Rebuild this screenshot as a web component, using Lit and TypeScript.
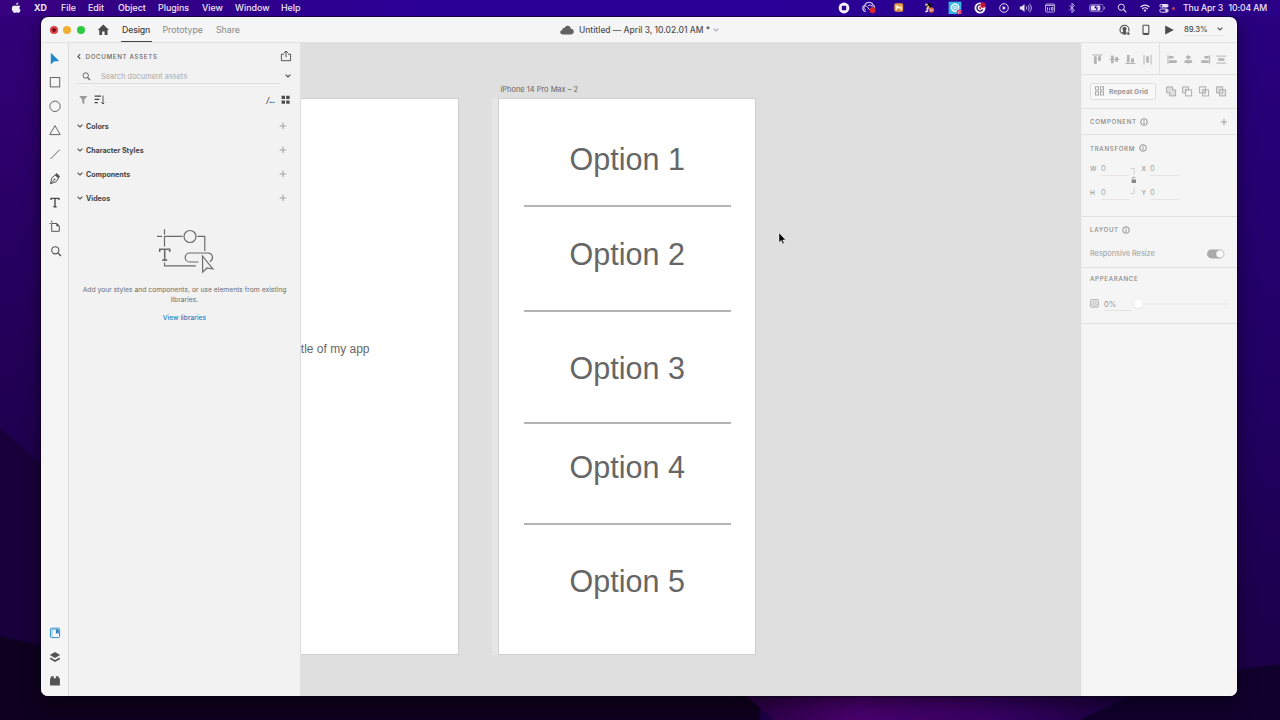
import { LitElement, html, svg, css, type TemplateResult } from "lit";
import { customElement } from "lit/decorators.js";

type Glyph = ReturnType<typeof svg>;

const icon = (w: number, h: number, body: Glyph): TemplateResult =>
  html`<svg class="icon" width=${w} height=${h} viewBox="0 0 ${w} ${h}" fill="none">${body}</svg>`;

const MENUS = ["File", "Edit", "Object", "Plugins", "View", "Window", "Help"];

const STATUS: Glyph[] = [
  svg`<circle cx="8" cy="8" r="5.4" fill="#f4f0fa"/><rect x="5.8" y="5.8" width="4.4" height="4.4" rx=".8" fill="#2a0090"/>`,
  svg`<path d="M4.600 11.600a3.300 3.300 0 0 1-.8-6.300 4.400 4.400 0 0 1 8.300-.2 3 3 0 0 1 1.600 2.600" stroke="#d9ccee" stroke-width="1.200"/><path d="M4.800 9.700a1.800 1.800 0 1 1 1.600-2.800l2.200 3M7 6a2.500 2.500 0 0 1 4.500 1.600" stroke="#d9ccee" stroke-width="1"/><circle cx="11.600" cy="10.200" r="3" fill="#d9262c"/>`,
  svg`<rect x="3.300" y="3.200" width="8.900" height="8.600" rx="1.800" fill="#e99b43"/><path d="M4.800 9V5.600h2l.8 1h3V9.800H5.500" fill="#fff1d9"/><path d="M6.500 8.500h2.600v2H6.500z" fill="#d27b28"/>`,
  svg`<circle cx="8" cy="5.700" r="2.800" fill="#111"/><path d="M4 4.200h3M4.600 5.800l2-1.500M4.400 11.500h2.200V8.200H5" stroke="#d8c6a4" stroke-width="1.100"/><circle cx="7.200" cy="7" r="1.300" fill="#e9bd87"/><path d="M5 12.500c0-3 1.600-4 4-4" stroke="#e7e1f3" stroke-width="1"/><circle cx="10.400" cy="10" r="2.700" fill="#e2653e"/><path d="M9.700 8.900v2.200M11.100 8.900v2.200" stroke="#fff" stroke-width=".6"/>`,
  svg`<rect x="1.600" y="1.700" width="12.800" height="12.300" fill="#35b5df"/><circle cx="8" cy="7.600" r="4.400" fill="#e9f8fc"/><circle cx="8" cy="7.600" r="2.400" stroke="#56b7d9" stroke-width="1"/><circle cx="8" cy="7.600" r=".8" fill="#56b7d9"/><circle cx="12" cy="12" r="2.400" fill="#ea4164"/><path d="M11.100 12.900l1.800-1.800" stroke="#fff" stroke-width=".7"/>`,
  svg`<circle cx="8" cy="8" r="5.500" fill="#f4f0fa"/><path d="M10.800 9.700a3.200 3.200 0 1 1-2.500-5" stroke="#2b0a55" stroke-width="1.300"/><circle cx="11" cy="5" r="2.700" fill="#c4143c"/><circle cx="8.200" cy="8.100" r="1" fill="#c4143c"/>`,
  svg`<circle cx="8" cy="8" r="4.300" stroke="#e2daf2" stroke-width="1"/><path d="M6.700 5.900v4.200L10.200 8z" fill="#eee8f8"/>`,
  svg`<path d="M1.800 6.500h1.800L6.500 4v8L3.600 9.600H1.800z" fill="#e9e2f5"/><path d="M8 6.200a2.600 2.600 0 0 1 0 3.600M9.800 4.900a4.400 4.400 0 0 1 0 6.200M11.600 3.800a6 6 0 0 1 0 8.400" stroke="#cfc3e8" stroke-width=".9"/>`,
  svg`<rect x="3.600" y="4" width="9" height="8" rx="1" stroke="#b9aadd" stroke-width="1"/><path d="M4 5.400h8.400M5.500 7.400v3M7.600 7.400v3M9.600 7.400h1.400v2.600H9.600z" stroke="#c6badf" stroke-width="1"/>`,
  svg`<path d="M5.400 5.600l5 4.600L8 12.600V3.200l2.400 2.400-5 4.600" stroke="#d8ceed" stroke-width=".9"/>`,
  svg`<rect x=".5" y="4.400" width="13.600" height="7.200" rx="2" stroke="#a08fd0" stroke-width=".8"/><rect x="1.700" y="5.500" width="9.600" height="5" rx="1" fill="#e8e0f5"/><path d="M15.400 6.800v2.400" stroke="#a08fd0"/><path d="M7.600 4.400L5 8.300h2.400l-.9 3.200 3-4H7.200z" fill="#2a0090"/>`,
  svg`<circle cx="7.300" cy="7.200" r="3.100" stroke="#e2daf2" stroke-width="1"/><path d="M9.600 9.500l2.700 2.800" stroke="#e2daf2" stroke-width="1.100"/>`,
  svg`<path d="M3.600 7a6.200 6.200 0 0 1 8.800 0M5.200 9a4 4 0 0 1 5.600 0" stroke="#e6dff4" stroke-width="1.200"/><path d="M6.500 10.300L8 12l1.500-1.700a2.200 2.200 0 0 0-3 0z" fill="#e6dff4"/>`,
  svg`<rect x="3.400" y="4" width="9.200" height="3.600" rx="1.800" fill="#e3daf3"/><rect x="3.800" y="9" width="8.400" height="3.200" rx="1.600" stroke="#e3daf3"/><circle cx="5.300" cy="5.800" r="1" fill="#2a0090"/><circle cx="10.400" cy="10.600" r="1.400" fill="#e3daf3"/>`,
];

const TOOLS: Glyph[] = [
  svg`<path d="M7.800 5.700v12l2.900-3.300 5.500-.5z" fill="#2089ca"/>`,
  svg`<rect x="7.300" y="6.500" width="9.400" height="9.400" stroke="#666" stroke-width="1"/>`,
  svg`<circle cx="12" cy="11.300" r="5.200" stroke="#666" stroke-width="1"/>`,
  svg`<path d="M12 6.600l5.200 9H6.800z" stroke="#666" stroke-width="1"/>`,
  svg`<path d="M7.500 16l9.200-9.300" stroke="#666" stroke-width="1"/>`,
  svg`<path d="M7.500 16.800l1.300-6 3.400-2.800 3.300 3-2.200 3.600zM7.800 16.500l3-3.200" stroke="#555" stroke-width="1"/><path d="M12 7.700L13.600 6l3.500 3.400-1.600 1.800z" fill="#555"/><circle cx="11.500" cy="12.400" r=".9" fill="#555"/>`,
  svg`<path d="M8.100 9.100V7.400h7.800v1.700M12 7.400v8.200M10.400 15.800h3.200" stroke="#4b4b4b" stroke-width="1.400"/>`,
  svg`<path d="M8.700 8.500h5l2.600 2.400v5.400H8.700zM8.700 5.600v2M6.500 8.500h1.200" stroke="#555" stroke-width="1"/><path d="M13.300 8v3.300h3.300z" fill="#4b4b4b"/>`,
  svg`<circle cx="12.300" cy="11.300" r="3.600" stroke="#555" stroke-width="1.100"/><path d="M15 14l2.900 2.900" stroke="#555" stroke-width="1.400"/>`,
];

const DOCKS: Glyph[] = [
  svg`<rect x="7.400" y="7.200" width="9.200" height="9.400" rx="1.200" stroke="#2f8fc6" stroke-width="1"/><path d="M9 7.500v8.800M7.800 8.700h8.600" stroke="#7cbbe0" stroke-width=".9"/><path d="M12.900 8.500h2.800v4.400l-1.400-1.100-1.400 1.100z" fill="#2480bd"/>`,
  svg`<path d="M12 7l5.200 2.900-5.200 3-5.200-3z" fill="#555"/><path d="M7.200 13.300l4.800 2.700 4.800-2.700" stroke="#555" stroke-width="1.700"/>`,
  svg`<path d="M7 9.200h.9V7.300h2.800v1.900h2.200V7.300h2.800v1.900h1.200v7.300H7z" fill="#555"/>`,
];

const ALIGN_V: Glyph[] = [
  svg`<path d="M3.400 4h10M6.300 5v8M10.500 5v5" stroke="#b4b4b4" stroke-width="1"/><path d="M4.900 5.400h2.900v7.400H4.900zM9.100 5.400H12v4.400H9.100z" fill="#b4b4b4"/>`,
  svg`<path d="M3.400 8.400h10" stroke="#b4b4b4" stroke-width="1"/><path d="M5 4.500h2.700v7.800H5zM9.300 6.100H12v4.600H9.300z" fill="#b4b4b4"/>`,
  svg`<path d="M3.400 12.500h10" stroke="#b4b4b4" stroke-width="1"/><path d="M4.900 4h2.700v7.600H4.900zM9.100 7.200h2.800v4.400H9.100z" fill="#b4b4b4"/>`,
  svg`<path d="M5 4v9.400M12 4v9.400" stroke="#b4b4b4" stroke-width="1"/><path d="M7.200 5.200h2.600v6.600H7.200z" fill="#b4b4b4"/>`,
];
const ALIGN_H: Glyph[] = [
  svg`<path d="M4 4v9.200" stroke="#b4b4b4" stroke-width="1"/><path d="M5 5h4.400v2.600H5zM5 9.300h7.800V12H5z" fill="#b4b4b4"/>`,
  svg`<path d="M8.200 3.600v9.800" stroke="#b4b4b4" stroke-width="1"/><path d="M6.200 5h4.200v2.600H6.200zM4.500 9.300h7.600V12H4.500z" fill="#b4b4b4"/>`,
  svg`<path d="M12.600 4v9.200" stroke="#b4b4b4" stroke-width="1"/><path d="M7.400 5h4.400v2.600H7.400zM4.200 9.300h7.600V12H4.200z" fill="#b4b4b4"/>`,
  svg`<path d="M3.300 5.100h10M3.300 12.100h10" stroke="#b4b4b4" stroke-width="1"/><path d="M5.200 7.200h6.200v2.600H5.200z" fill="#b4b4b4"/>`,
];
const BOOLEANS: Glyph[] = [
  svg`<path d="M3.600 3.900h6v3h3v6h-6v-3h-3z" fill="#dedede" stroke="#adadad" stroke-width="1"/>`,
  svg`<path d="M3.600 3.900h6v3h-3v3h-3z" fill="#e7e7e7" stroke="#adadad" stroke-width="1"/><rect x="6.600" y="6.900" width="6" height="6" stroke="#adadad"/>`,
  svg`<rect x="3.600" y="3.900" width="6" height="6" stroke="#adadad"/><rect x="6.600" y="6.900" width="6" height="6" stroke="#adadad"/><path d="M6.600 6.900h3v3h-3z" fill="#dedede" stroke="#adadad"/>`,
  svg`<rect x="3.600" y="3.900" width="6" height="6" fill="#e2e2e2" stroke="#adadad"/><rect x="6.600" y="6.900" width="6" height="6" fill="#e2e2e2" stroke="#adadad"/><path d="M6.600 6.900h3v3h-3z" fill="#f5f5f5" stroke="#adadad"/>`,
];

const chevron = (color: string) => icon(8, 8, svg`<path d="M1.600 2.700l2.400 2.300 2.400-2.300" stroke=${color} stroke-width="1.100"/>`);
const plus = (color: string) => icon(8, 8, svg`<path d="M4 .8v6.400M.8 4h6.400" stroke=${color} stroke-width=".9"/>`);
const info = icon(8, 8, svg`<circle cx="4" cy="4" r="3.300" stroke="#777" stroke-width=".8"/><path d="M4 3.600v2.200M4 2v.9" stroke="#777" stroke-width=".9"/>`);

const OPTIONS = [
  { label: "Option 1", top: 42 },
  { label: "Option 2", top: 137 },
  { label: "Option 3", top: 251 },
  { label: "Option 4", top: 350 },
  { label: "Option 5", top: 464 },
];
const RULES = [106, 211, 323, 424];

@customElement("app-root")
export class AppRoot extends LitElement {
  static styles = css`
    :host { display: block; width: 1280px; height: 720px; overflow: hidden; font-family: Inter, "Liberation Sans", sans-serif; color: #4b4b4b; }
    * { box-sizing: border-box; }
    svg { display: block; flex: none; overflow: visible; }
    span { white-space: nowrap; }
    .desktop { position: relative; width: 1280px; height: 720px; display: flex; flex-direction: column; background: #1a0040; }
    .wall { position: absolute; inset: 0; }
    .menubar { position: relative; flex: none; height: 16px; display: flex; align-items: center; color: #eee8f8; font-size: 8.9px; font-weight: 500; background: linear-gradient(90deg, #36007e, #2c0094 30%, #2a0098 60%, #2a0086); }
    .menus { display: grid; grid-template-columns: 23px 27px 27px 30px 40px 44px 33px 46px 30px; padding-left: 11px; align-items: center; line-height: 14px; }
    .menus span, .menus b { margin-top: -1px; }
    .menus b { font-weight: 700; }
    .status { margin-left: 525px; display: grid; grid-template-columns: 25px 29.5px 30.5px 26px 25px 23.5px 22.5px 24px 21.5px 25.5px 24.5px 23.5px 19px 16px; align-items: center; }
    .dot { width: 3px; height: 3px; border-radius: 50%; background: #c9455c; margin: 1px 8px 0 0; }
    .clock { display: flex; gap: 5.5px; font-size: 8.7px; letter-spacing: -.12px; margin-top: -1px; }
    .window { position: relative; margin: 1px 0 0 41px; width: 1196px; height: 679px; border-radius: 7px; overflow: hidden; background: #f5f5f5; display: flex; flex-direction: column; }
    .shadow { position: absolute; left: 41px; top: 17px; width: 1196px; height: 679px; border-radius: 7px; box-shadow: 0 6px 18px rgba(0, 0, 0, .5), 0 0 1px 1px rgba(10, 0, 30, .5); }
    .titlebar { flex: none; height: 26px; display: grid; grid-template-columns: 56px 25px 40.5px 53.5px 344px 1fr auto; align-items: center; border-bottom: 1px solid #e2e2e2; font-size: 8.8px; color: #888; }
    .lights { display: flex; gap: 5.4px; padding-left: 9px; }
    .light { width: 8px; height: 8px; border-radius: 50%; }
    .red { background: radial-gradient(circle, #7d1118 0 1.6px, #dc4345 2.2px); }
    .amber { background: #efb02f; }
    .green { background: #2fca43; }
    .tab { height: 25px; line-height: 25px; letter-spacing: -.02px; }
    .tab.active { color: #444; width: 31px; line-height: 26px; border-bottom: 1.5px solid #444; padding-left: 1px; margin-left: -1px; font-weight: 500; font-size: 8.7px; letter-spacing: -.1px; }
    .doc { display: flex; align-items: center; gap: 5px; color: #505050; }
    .doc .title { font-size: 8.45px; font-weight: 500; letter-spacing: .01px; }
    .doc .icon:last-child { margin-left: -3px; }
    .actions { display: flex; align-items: center; padding-right: 13px; color: #4b4b4b; }
    .zoom { display: flex; align-items: center; justify-content: space-between; width: 40px; height: 13px; margin-left: 9.5px; font-size: 7.7px; font-weight: 500; letter-spacing: -.08px; border-bottom: 1px solid #e6e6e6; }
    .zoom span { padding-top: 1px; }
    .body { flex: 1; display: grid; grid-template-columns: 28px 232px 780px 1fr; min-height: 0; }
    .tools { border-right: 1px solid #dcdcdc; display: flex; flex-direction: column; padding: 4px 0 3px 2px; background: #f5f5f5; }
    .spring { flex: 1; }
    .assets { background: #f2f2f2; border-right: 1px solid #ddd; display: flex; flex-direction: column; }
    .head { height: 26px; padding: 0 8px 0 6px; display: flex; align-items: center; }
    .caps { font-size: 6.2px; letter-spacing: .66px; font-weight: 500; color: #666; }
    .head .caps { flex: 1; margin-left: 2.5px; margin-top: 1px; }
    .search { margin-left: 8px; height: 15px; display: flex; align-items: center; }
    .field { width: 203px; height: 15px; border-bottom: 1px solid #dfdfdf; display: flex; align-items: center; gap: 9px; padding: 0 0 0 4px; color: #aaa; font-size: 7.4px; }
    .search > .icon { margin: -1px 0 0 4px; }
    .filters { height: 30px; padding: 1px 9px 0 9px; display: flex; align-items: center; gap: 4px; }
    .filters .path { margin: 0 1.5px 0 auto; font-size: 8px; font-weight: 600; color: #555; letter-spacing: -.6px; }
    .section { height: 24px; display: flex; align-items: center; padding: 0 13px 0 7px; font-size: 7.05px; font-weight: 700; color: #444; }
    .section span { flex: 1; margin-left: 2px; }
    .empty { display: flex; flex-direction: column; align-items: center; text-align: center; padding-top: 19px; font-size: 6.78px; line-height: 10px; color: #6b6b6b; }
    .empty p { margin: 12px 0 0; width: 230px; }
    .empty a { margin-top: 8px; color: #2480c4; font-size: 6.7px; font-weight: 500; }
    .canvas { position: relative; overflow: hidden; background: #dfdfdf; border-right: 1px solid #ddd; }
    .board { position: absolute; top: 55px; height: 557px; background: #fff; border: 1px solid #cfcfcf; }
    .board.first { left: -1px; width: 158.5px; }
    .board.second { left: 197px; width: 258px; }
    .guide { position: absolute; left: 191px; top: 55px; width: 7px; height: 557px; background: #e6e6e6; }
    .name { position: absolute; left: 199.5px; top: 41px; font-size: 7.45px; line-height: 12px; color: #666; }
    .subtitle { position: absolute; left: -.2px; top: 242px; font: 12px/16px "Liberation Sans", sans-serif; color: #666; }
    .option { position: absolute; left: 70.6px; font: 30.5px/36px "Liberation Sans", sans-serif; color: #666; }
    .rule { position: absolute; left: 25px; width: 207px; height: 2px; background: #b4b4b4; }
    .pointer { position: absolute; left: 477px; top: 189px; }
    .props { background: #f5f5f5; border-left: 1px solid #eee; color: #999; font-size: 8px; }
    .group { border-bottom: 1.5px solid #e0e0e0; padding: 0 8px 0 8px; }
    .align { height: 32px; display: grid; grid-template-columns: 77px 1fr; padding: 0; }
    .align > div { display: flex; align-items: center; padding-left: 7px; gap: .7px; }
    .align > div + div { border-left: 1px solid #e0e0e0; padding-left: 4px; gap: .4px; }
    .repeat { height: 33.5px; display: flex; align-items: center; }
    .btn { width: 66px; height: 17px; border: 1px solid #dedede; border-radius: 2px; display: flex; align-items: center; gap: 4.5px; padding-left: 3.5px; font-weight: 700; font-size: 6.85px; margin-right: 6.7px; background: #f8f8f8; }
    .repeat > .icon { margin-right: .7px; }
    .row { display: flex; align-items: center; gap: 3.5px; }
    .row .caps { color: #888; }
    .component { height: 26.5px; padding-top: 1px; }
    .component .icon:last-child { margin-left: auto; margin-right: 1.5px; }
    .transform { height: 81.5px; padding-top: 9px; }
    .dims { display: grid; grid-template-columns: 10.5px 28px 13px 8px 29px; grid-template-rows: 24px 24px; margin-top: 4.5px; align-items: center; font-size: 6.4px; font-weight: 500; }
    .dims .val { height: 15px; line-height: 16px; font-size: 7.6px; font-weight: 400; border-bottom: 1px solid #e5e5e5; color: #aaa; padding-left: .6px; }
    .dims .link { grid-column: 3; grid-row: 1 / span 2; margin-left: 1px; }
    .layout { height: 51px; padding-top: 9px; }
    .resize { display: flex; justify-content: space-between; align-items: center; margin-top: 12px; padding-right: 4px; font-size: 7.35px; }
    .resize span { line-height: 16px; }
    .appearance { height: 56px; padding-top: 7.5px; }
    .opacity { display: flex; align-items: center; margin-top: 14px; font-size: 7.6px; }
    .opacity .val { width: 28px; height: 15px; line-height: 17px; margin-left: 5px; border-bottom: 1px solid #e2e2e2; }
  `;

  render() {
    return html`
      <div class="desktop">
        <svg class="wall" width="1280" height="720" viewBox="0 0 1280 720">
          <defs>
            <linearGradient id="side" x1="0" y1="0" x2="0" y2="1">
              <stop offset="0" stop-color="#32007a"/><stop offset=".5" stop-color="#220056"/><stop offset="1" stop-color="#15003a"/>
            </linearGradient>
            <linearGradient id="east" x1="0" y1="0" x2="0" y2="1">
              <stop offset="0" stop-color="#290080"/><stop offset=".55" stop-color="#210062"/><stop offset="1" stop-color="#1b0044"/>
            </linearGradient>
            <linearGradient id="glow" x1="740" y1="0" x2="1130" y2="0" gradientUnits="userSpaceOnUse">
              <stop offset="0" stop-color="#26003f"/><stop offset=".3" stop-color="#48006c"/><stop offset=".65" stop-color="#360062"/><stop offset="1" stop-color="#18003c"/>
            </linearGradient>
          </defs>
          <rect width="640" height="720" fill="url(#side)"/>
          <rect x="640" width="640" height="720" fill="url(#east)"/>
          <path d="M0 428L48 470V720H0z" fill="#18003a"/>
          <path d="M0 636L60 650H760V720H0z" fill="#0e001f"/>
          <path d="M738 690H1240V720H775z" fill="url(#glow)"/>
          <path d="M1080 720C1140 690 1190 675 1280 664V720z" fill="#10002c"/>
        </svg>
        <div class="shadow"></div>
        <header class="menubar">
          <nav class="menus">
            ${icon(11, 12, svg`<path transform="translate(0 .6)" d="M7.300 0c.1 1.200-.9 2.400-2.100 2.400C5 1.300 6.100.2 7.300 0zM9.200 4C8 4.800 8.100 6.800 9.600 7.400 9.200 8.700 8.300 10.300 7.200 10.300c-.7 0-.9-.4-1.800-.4s-1.100.4-1.800.4C2.300 10.300.8 7.900.8 5.900c0-2 1.300-3.100 2.500-3.100.8 0 1.500.5 2 .5s1.300-.6 2.300-.5c.5 0 1.200.3 1.600 1.200z" fill="#f1ecf9"/>`)}
            <b>XD</b>${MENUS.map((m) => html`<span>${m}</span>`)}
          </nav>
          <div class="status">${STATUS.map((g) => icon(16, 16, g))}</div>
          <i class="dot"></i>
          <div class="clock"><span>Thu Apr 3</span><span>10:04 AM</span></div>
        </header>
        <main class="window">
          <header class="titlebar">
            <div class="lights"><i class="light red"></i><i class="light amber"></i><i class="light green"></i></div>
            ${icon(12, 12, svg`<path d="M6.300.6l5.700 5.400H10.500V11H7.600V7.500H5.100V11H2.300V6H.7z" fill="#4b4b4b"/>`)}
            <span class="tab active">Design</span><span class="tab">Prototype</span><span class="tab">Share</span>
            <div class="doc">
              ${icon(14, 10, svg`<path d="M3 9.500C1.200 9.500.2 8.400.2 7.100c0-1.200.9-2 2-2.200C2.400 3.300 3.500 2.500 4.700 2.700 5.400 1.200 6.500.7 7.700.7c1.900 0 3.100 1.400 3.100 3.100 1.900.1 3 1.200 3 2.800 0 1.700-1.200 2.900-2.900 2.900z" fill="#626262"/>`)}
              <span class="title">Untitled — April 3, 10.02.01 AM *</span>${chevron("#aaa")}
            </div>
            <div class="actions">
              ${icon(12, 12, svg`<circle cx="5.500" cy="5.700" r="4.500" stroke="#4b4b4b" stroke-width="1.100"/><path d="M5.500 2.700c1.300 0 2 .9 2 2.100 0 1-.5 1.800-.9 2.300.2.800 1.300 1 1.900 1.500L5.800 10.400 2.500 8.600c.6-.5 1.700-.7 1.900-1.500C4 6.600 3.500 5.800 3.500 4.800c0-1.200.7-2.100 2-2.100z" fill="#555"/><path d="M9.200 7.600v4M7.200 9.600h4" stroke="#f5f5f5" stroke-width="2.400"/><path d="M9.200 8v3.200M7.600 9.600h3.200" stroke="#4b4b4b" stroke-width="1"/>`)}
              ${icon(34, 12, svg`<rect x="12" y="1.200" width="5.800" height="9.200" rx=".8" stroke="#4b4b4b" stroke-width="1.100"/><path d="M12.300 9.400h5.200" stroke="#4b4b4b" stroke-width="1"/>`)}
              ${icon(10, 12, svg`<path d="M.2 1.600L8.800 6 .2 10.400z" fill="#4b4b4b"/>`)}
              <div class="zoom"><span>89.3%</span>${chevron("#555")}</div>
            </div>
          </header>
          <div class="body">
            <aside class="tools">
              ${TOOLS.map((g) => icon(24, 24, g))}
              <div class="spring"></div>
              ${DOCKS.map((g) => icon(24, 24, g))}
            </aside>
            <section class="assets">
              <div class="head">
                ${icon(8, 8, svg`<path d="M5.200 2L3 4.400l2.200 2.400" stroke="#444" stroke-width="1.100"/>`)}
                <span class="caps">DOCUMENT ASSETS</span>
                ${icon(12, 12, svg`<path d="M4 4.200H1.400v6.500h9.200V4.200H8M6 7.200V1.200M3.900 3.100L6 1l2.100 2.100" stroke="#555" stroke-width="1"/>`)}
              </div>
              <div class="search">
                <div class="field">
                  ${icon(11, 11, svg`<circle cx="4.700" cy="4.500" r="2.700" stroke="#555" stroke-width=".9"/><path d="M6.600 6.500l2.500 2.600" stroke="#555" stroke-width="1.100"/>`)}
                  <span>Search document assets</span>
                </div>
                ${chevron("#444")}
              </div>
              <div class="filters">
                ${icon(12, 12, svg`<path d="M1.200 2h8.200L6.300 5.800v4.400L4.300 9V5.800z" fill="#999"/>`)}
                ${icon(12, 12, svg`<path d="M.6 2.200h6.400M.6 5.400h4.800M.6 8.600h3.200" stroke="#444" stroke-width="1.200"/><path d="M9 1.500v8.300M7.300 8.200L9 10l1.200-1.300" stroke="#555" stroke-width="1"/>`)}
                <span class="path"><i>/</i>...</span>
                ${icon(11, 12, svg`<path d="M1.600 1.800H5v3.300H1.600zM6.200 1.800h3.400v3.300H6.200zM1.600 6.500H5v3.300H1.600zM6.200 6.500h3.400v3.300H6.200z" fill="#4b4b4b"/>`)}
              </div>
              ${["Colors", "Character Styles", "Components", "Videos"].map(
                (s) => html`<div class="section">${chevron("#555")}<span>${s}</span>${plus("#999")}</div>`,
              )}
              <div class="empty">
                ${icon(58, 44, svg`<g stroke="#6a6a6a" stroke-width="1.200"><path d="M8.500.2v5.400M1 7.400h5M8.500 17.500V7.400h18M8.500 33.500v3.400h31.300M41.500 7.400h7.300V22"/><circle cx="34" cy="7.500" r="6"/><path d="M42.500 33h-8.800a4.500 4.500 0 0 1 0-9h18.600a4.500 4.500 0 0 1 1.500 8.600"/><path d="M46.500 27l10.300 13-5.800-1-4.300 4.100z"/></g><path d="M3.700 23v-2.700h10V23M8.700 20.300v10.600M6.300 31.100h4.900" stroke="#6a6a6a" stroke-width="1.600"/>`)}
                <p>Add your styles and components, or use elements from existing<br />libraries.</p>
                <a>View libraries</a>
              </div>
            </section>
            <section class="canvas">
              <div class="board first"><span class="subtitle">tle of my app</span></div>
              <div class="guide"></div>
              <span class="name">iPhone 14 Pro Max – 2</span>
              <div class="board second">
                ${OPTIONS.map((o) => html`<span class="option" style="top:${o.top}px">${o.label}</span>`)}
                ${RULES.map((y) => html`<i class="rule" style="top:${y}px"></i>`)}
              </div>
              <svg class="pointer" width="9" height="13" viewBox="0 0 9 13"><path d="M1 .8v9.700l2.200-2 1.500 3.400 1.500-.7-1.500-3.200h2.900z" fill="#000" stroke="#fff" stroke-width=".5"/></svg>
            </section>
            <aside class="props">
              <div class="group align">
                <div>${ALIGN_V.map((g) => icon(16, 16, g))}</div>
                <div>${ALIGN_H.map((g) => icon(16, 16, g))}</div>
              </div>
              <div class="group repeat">
                <div class="btn">
                  ${icon(10, 10, svg`<rect x=".4" y=".8" width="3.200" height="3.200" stroke="#999" stroke-width=".8"/><rect x="5.400" y=".8" width="3.200" height="3.200" stroke="#999" stroke-width=".8"/><rect x=".4" y="5.800" width="3.200" height="3.200" stroke="#999" stroke-width=".8"/><rect x="5.400" y="5.800" width="3.200" height="3.200" stroke="#999" stroke-width=".8"/>`)}
                  <span>Repeat Grid</span>
                </div>
                ${BOOLEANS.map((g) => icon(16, 16, g))}
              </div>
              <div class="group row component"><span class="caps">COMPONENT</span>${info}${plus("#999")}</div>
              <div class="group transform">
                <div class="row"><span class="caps">TRANSFORM</span>${info}</div>
                <div class="dims">
                  <span>W</span><span class="val">0</span>
                  <svg class="link" width="9" height="30" viewBox="0 0 9 30" fill="none"><path d="M.5 2.500h3.700v6M.5 27.500h3.700v-6" stroke="#ccc" stroke-width=".9"/><rect x="1.600" y="13.500" width="4.400" height="3.500" fill="#888"/><path d="M2.500 13.500v-1a1.500 1.500 0 0 1 2.900-.3" stroke="#888" stroke-width=".9"/></svg>
                  <span>X</span><span class="val">0</span>
                  <span>H</span><span class="val">0</span><span>Y</span><span class="val">0</span>
                </div>
              </div>
              <div class="group layout">
                <div class="row"><span class="caps">LAYOUT</span>${info}</div>
                <div class="resize"><span>Responsive Resize</span>
                  ${icon(18, 10, svg`<rect x="0" y=".4" width="17.400" height="9" rx="4.500" fill="#aaa"/><circle cx="13" cy="4.900" r="3.700" fill="#f8f8f8"/>`)}
                </div>
              </div>
              <div class="group appearance">
                <div class="row"><span class="caps">APPEARANCE</span></div>
                <div class="opacity">
                  ${icon(9, 9, svg`<rect x=".6" y=".6" width="7.800" height="7.500" rx=".6" stroke="#aaa" stroke-width=".9"/><path d="M1.400 3.200h6.200M1.400 5.600h6.200" stroke="#bbb" stroke-width="1.200" stroke-dasharray="1.200 1.200"/><path d="M2.600 2h5M2.600 4.400h5M2.600 6.800h5" stroke="#bbb" stroke-width="1.200" stroke-dasharray="1.200 1.200"/>`)}
                  <span class="val">0%</span>
                  ${icon(96, 14, svg`<path d="M8 7h87" stroke="#e7e7e7" stroke-width="1.500"/><circle cx="6.300" cy="7.300" r="5" fill="#e3e3e3"/><circle cx="6.300" cy="6.900" r="4.500" fill="#fff"/>`)}
                </div>
              </div>
            </aside>
          </div>
        </main>
      </div>
    `;
  }
}
